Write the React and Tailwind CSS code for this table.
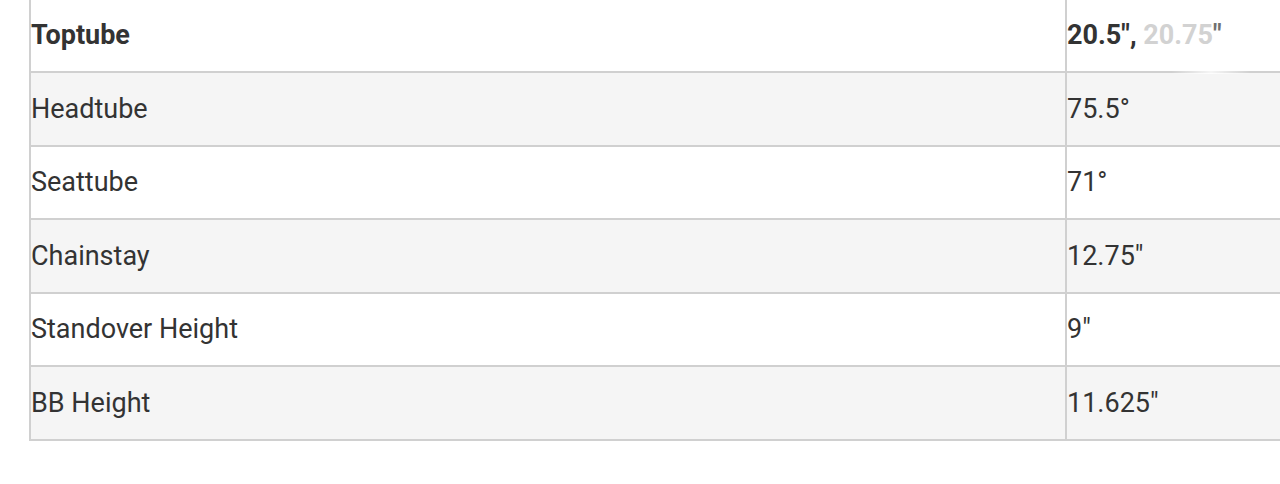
import React from "react";

const rows = [
  { label: "Headtube", value: "75.5°", bg: "bg-[#f5f5f5]" },
  { label: "Seattube", value: "71°", bg: "bg-white" },
  { label: "Chainstay", value: "12.75\"", bg: "bg-[#f5f5f5]" },
  { label: "Standover Height", value: "9\"", bg: "bg-white" },
  { label: "BB Height", value: "11.625\"", bg: "bg-[#f5f5f5]" },
];

export default function App() {
  return (
    <div className="w-[1280px] h-[484px] bg-white overflow-hidden" style={{ fontFamily: "Roboto, 'Noto Sans', sans-serif" }}>
      <div className="ml-[29px] w-[1320px] border-l-2 border-[#d0d0d0] text-[27px] text-[#333333]">
        <div className="flex h-[73px] border-b-2 border-[#d0d0d0] bg-white relative">
          <div className="w-[1036px] border-r-2 border-[#d0d0d0] flex items-center font-bold">Toptube</div>
          <div className="flex items-center font-bold">
            <span>20.5",&nbsp;</span>
            <span className="text-[#d2d2d2]">20.75</span>
            <span className="text-[#707070]">"</span>
          </div>
          <div className="absolute left-[1140px] top-[68px] w-[80px] h-[6px] bg-gradient-to-r from-transparent via-white to-transparent opacity-80"></div>
        </div>
        {rows.map((r) => (
          <div key={r.label} className={`flex h-[73.6px] border-b-2 border-[#d0d0d0] ${r.bg}`}>
            <div className="w-[1036px] border-r-2 border-[#d0d0d0] flex items-center">{r.label}</div>
            <div className="flex items-center">{r.value}</div>
          </div>
        ))}
      </div>
    </div>
  );
}
